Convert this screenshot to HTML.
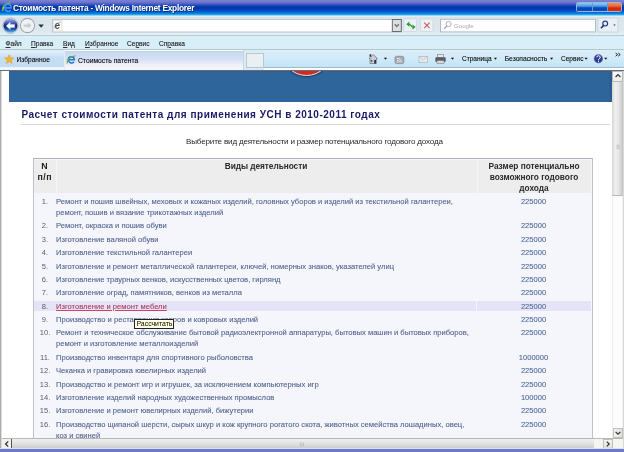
<!DOCTYPE html>
<html><head><meta charset="utf-8">
<style>
*{margin:0;padding:0;box-sizing:border-box}
html,body{width:624px;height:452px;overflow:hidden;background:#fff;font-family:"Liberation Sans",sans-serif}
#page,#menu,#fav,#title,#addr{will-change:transform}
.a{position:absolute}
#title{left:0;top:0;width:624px;height:16px;background:linear-gradient(#7b82d4 0px,#7078cf 2px,#4a5fc0 4px,#1040b0 6px,#0034a8 8px,#0044c0 10px,#0064d4 12px,#108ce0 14px,#40b8f0 15px,#d8f4fc 16px)}
#title .t{left:13px;top:2.2px;font-size:8.4px;font-weight:bold;letter-spacing:-0.27px;color:#fff;white-space:nowrap;text-shadow:0.6px 0.6px 0.4px #0a2a70;line-height:12px}
#addr{left:0;top:16px;width:624px;height:19px;background:linear-gradient(#e8f6fa 0,#d8e4ea 1px,#dce8ee 15px,#e2f0f6 18px)}
#menu{left:0;top:35px;width:624px;height:15px;background:#d8eef8;border-top:1px solid #b9cdd0;border-bottom:1px solid #b5c9cc}
#fav{left:0;top:50px;width:624px;height:21px;background:#d8ecf6}
.mi{top:0.7px;font-size:6.6px;color:#111;line-height:14px;white-space:nowrap;-webkit-text-stroke:0.1px #333}
.mi u{text-decoration-thickness:0.6px;text-underline-offset:1px}
.tb{font-size:6.6px;color:#000;line-height:10px;white-space:nowrap;-webkit-text-stroke:0.1px #222}
#page{left:0;top:0;width:624px;height:452px;overflow:hidden}
.hd{font-size:8.3px;font-weight:bold;color:#2a2a2a;line-height:11px;white-space:nowrap}
.row.sel{background:linear-gradient(#f6f7fc 0,#f6f7fc 0.6px,#e4e4f6 0.6px,#e6e2f8 11.3px,#f6f7fc 11.3px)}
.row.sel::after{content:"";position:absolute;left:441.5px;top:0.6px;width:1.5px;height:10.7px;background:#f4f4fc}
.sel .txt{color:#c8284a;text-decoration:underline;text-decoration-color:#d04060}
.row{position:absolute;left:34px;width:557px;background:#f5f6fc}
.num{position:absolute;left:0px;width:22px;text-align:center;color:#575d6e;font-size:7.56px;line-height:11.1px;white-space:nowrap}
.txt{position:absolute;left:22px;color:#4e5f88;-webkit-text-stroke:0.12px #6a7aa0;font-size:7.6px;line-height:11.1px;white-space:nowrap}
.val{position:absolute;left:442px;width:115px;text-align:center;color:#4c6496;-webkit-text-stroke:0.1px #6a80b0;font-size:7.56px;line-height:11.1px}
</style></head><body>
<div id="page" class="a">
 <div class="a" style="left:9px;top:70.5px;width:603.5px;height:31.5px;background:linear-gradient(90deg,#2e659b 0,#2e659b 600px,#2a5c8e 601px);border-top:1px solid #3d5f82"></div>
 <div class="a" style="left:280.5px;top:24.5px;width:51px;height:51px;border-radius:50%;background:#d42a1e;border:1.5px solid #f0e0e4;box-shadow:0 1px 1.5px #1a3a60"></div>
 <div class="a" style="left:0;top:0;width:624px;height:70.5px;background:transparent"></div>
 <div class="a" id="h1" style="left:21.5px;top:108px;font-size:10px;font-weight:bold;letter-spacing:0.51px;color:#1a1a68;line-height:14px;white-space:nowrap">Расчет стоимости патента для применения УСН в 2010-2011 годах</div>
 <div class="a" style="left:21px;top:123.5px;width:589px;height:1px;background:#d8d8d4"></div>
 <div class="a" style="left:186px;top:135.5px;font-size:8.1px;letter-spacing:-0.19px;color:#2a2a2a;line-height:11px;white-space:nowrap">Выберите вид деятельности и размер потенциального годового дохода</div>
 <div class="a" style="left:32.8px;top:157.8px;width:560px;height:290px;border:1.7px solid #c0c0ca;border-top:1.7px solid #b0b0bc;background:#f5f6fc"></div>
 <div class="a" style="left:34px;top:159.5px;width:557px;height:33.5px;background:#ededed"></div>
 <div class="a" style="left:55.5px;top:159.5px;width:0.6px;height:33.5px;background:#f6f6f6"></div>
 <div class="a" style="left:476.5px;top:159.5px;width:0.6px;height:33.5px;background:#f6f6f6"></div>
 <div class="a hd" style="left:34px;top:160.5px;width:21.5px;text-align:center;font-size:8.8px;letter-spacing:0.5px;color:#222">N<br>п/п</div>
 <div class="a hd" style="left:56px;top:160.5px;width:420px;text-align:center;letter-spacing:-0.05px">Виды деятельности</div>
 <div class="a hd" style="left:477px;top:160.5px;width:114px;text-align:center;letter-spacing:0px">Размер потенциально<br>возможного годового<br>дохода</div>
<div class="row" style="top:195.70px;height:24.5px"><div class="num" style="top:0.3px">1.</div><div class="txt" style="top:0.3px">Ремонт и пошив швейных, меховых и кожаных изделий, головных уборов и изделий из текстильной галантереи,<br>ремонт, пошив и вязание трикотажных изделий</div><div class="val" style="top:0.3px">225000</div></div>
<div class="row" style="top:220.20px;height:13.36px"><div class="num" style="top:0.3px">2.</div><div class="txt" style="top:0.3px">Ремонт, окраска и пошив обуви</div><div class="val" style="top:0.3px">225000</div></div>
<div class="row" style="top:233.56px;height:13.36px"><div class="num" style="top:0.3px">3.</div><div class="txt" style="top:0.3px">Изготовление валяной обуви</div><div class="val" style="top:0.3px">225000</div></div>
<div class="row" style="top:246.92px;height:13.36px"><div class="num" style="top:0.3px">4.</div><div class="txt" style="top:0.3px">Изготовление текстильной галантереи</div><div class="val" style="top:0.3px">225000</div></div>
<div class="row" style="top:260.28px;height:13.36px"><div class="num" style="top:0.3px">5.</div><div class="txt" style="top:0.3px">Изготовление и ремонт металлической галантереи, ключей, номерных знаков, указателей улиц</div><div class="val" style="top:0.3px">225000</div></div>
<div class="row" style="top:273.64px;height:13.36px"><div class="num" style="top:0.3px">6.</div><div class="txt" style="top:0.3px">Изготовление траурных венков, искусственных цветов, гирлянд</div><div class="val" style="top:0.3px">225000</div></div>
<div class="row" style="top:287.00px;height:13.36px"><div class="num" style="top:0.3px">7.</div><div class="txt" style="top:0.3px">Изготовление оград, памятников, венков из металла</div><div class="val" style="top:0.3px">225000</div></div>
<div class="row sel" style="top:300.36px;height:13.36px"><div class="num" style="top:0.3px">8.</div><div class="txt" style="top:0.3px">Изготовление и ремонт мебели</div><div class="val" style="top:0.3px">225000</div></div>
<div class="row" style="top:313.72px;height:13.36px"><div class="num" style="top:0.3px">9.</div><div class="txt" style="top:0.3px">Производство и реставрация ковров и ковровых изделий</div><div class="val" style="top:0.3px">225000</div></div>
<div class="row" style="top:327.08px;height:24.5px"><div class="num" style="top:0.3px">10.</div><div class="txt" style="top:0.3px">Ремонт и техническое обслуживание бытовой радиоэлектронной аппаратуры, бытовых машин и бытовых приборов,<br>ремонт и изготовление металлоизделий</div><div class="val" style="top:0.3px">225000</div></div>
<div class="row" style="top:351.58px;height:13.36px"><div class="num" style="top:0.3px">11.</div><div class="txt" style="top:0.3px">Производство инвентаря для спортивного рыболовства</div><div class="val" style="top:0.3px">1000000</div></div>
<div class="row" style="top:364.94px;height:13.36px"><div class="num" style="top:0.3px">12.</div><div class="txt" style="top:0.3px">Чеканка и гравировка ювелирных изделий</div><div class="val" style="top:0.3px">225000</div></div>
<div class="row" style="top:378.30px;height:13.36px"><div class="num" style="top:0.3px">13.</div><div class="txt" style="top:0.3px">Производство и ремонт игр и игрушек, за исключением компьютерных игр</div><div class="val" style="top:0.3px">225000</div></div>
<div class="row" style="top:391.66px;height:13.36px"><div class="num" style="top:0.3px">14.</div><div class="txt" style="top:0.3px">Изготовление изделий народных художественных промыслов</div><div class="val" style="top:0.3px">100000</div></div>
<div class="row" style="top:405.02px;height:13.36px"><div class="num" style="top:0.3px">15.</div><div class="txt" style="top:0.3px">Изготовление и ремонт ювелирных изделий, бижутерии</div><div class="val" style="top:0.3px">225000</div></div>
<div class="row" style="top:418.38px;height:24.5px"><div class="num" style="top:0.3px">16.</div><div class="txt" style="top:0.3px">Производство щипаной шерсти, сырых шкур и кож крупного рогатого скота, животных семейства лошадиных, овец,<br>коз и свиней</div><div class="val" style="top:0.3px">225000</div></div>
 <div class="a" style="left:134px;top:318.5px;width:40px;height:10px;background:#ffffe1;border:1px solid #222;font-size:6.9px;color:#000;line-height:8px;padding-left:1.5px;white-space:nowrap">Рассчитать</div>
</div>
<div id="title" class="a"><div class="t a">Стоимость патента - Windows Internet Explorer</div></div>
<div id="addr" class="a">
 <svg class="a" style="left:0;top:0" width="624" height="19" viewBox="0 16 624 19">
  <defs>
   <radialGradient id="bk" cx="0.5" cy="0.3" r="0.75">
    <stop offset="0" stop-color="#9090e0"/><stop offset="0.45" stop-color="#1e2e90"/><stop offset="0.8" stop-color="#1a4aa8"/><stop offset="1" stop-color="#40a8e8"/>
   </radialGradient>
   <linearGradient id="bk2" x1="0" y1="0" x2="0" y2="1">
    <stop offset="0" stop-color="#a8b0ec"/><stop offset="0.25" stop-color="#5a6ac8"/><stop offset="0.5" stop-color="#14207a"/><stop offset="0.72" stop-color="#1a4aa0"/><stop offset="1" stop-color="#58c0f0"/>
   </linearGradient>
  </defs>
  <circle cx="10.5" cy="25.7" r="7.7" fill="none" stroke="#a8b4c0" stroke-width="0.9"/>
  <circle cx="10.5" cy="25.7" r="7" fill="url(#bk2)"/>
  <path d="M6.2 25.9 L10.2 22.2 L10.2 24.4 L14.6 24.4 L14.6 27.4 L10.2 27.4 L10.2 29.6 Z" fill="#f4fcff" stroke="#e0f0ff" stroke-width="0.4" stroke-linejoin="round"/>
  <circle cx="27.5" cy="25.5" r="7.1" fill="#eef2f4" stroke="#a4a8ac" stroke-width="1.1"/>
  <path d="M31.5 25.6 L28 22.6 L28 24.4 L23.6 24.4 L23.6 26.8 L28 26.8 L28 28.6 Z" fill="#c8ccd0"/>
  <path d="M38.3 24.5 L43.9 24.5 L41.1 27.8 Z" fill="#22344e"/>
  <rect x="52.5" y="19.5" width="349" height="12.5" fill="#fff" stroke="#b4c2cc" stroke-width="0.9"/>
  <rect x="392.3" y="19.5" width="9" height="12" fill="#dcdfe0" stroke="#5e6266" stroke-width="0.9"/>
  <path d="M394.8 24.3 L396.8 26.6 L398.8 24.3" fill="none" stroke="#6a6e72" stroke-width="1.3"/>
  <rect x="53.3" y="20.3" width="8.6" height="10.8" fill="#f8f8f4" stroke="#e4dcc0" stroke-width="0.7"/>
  <text x="54.4" y="29.3" font-family="Liberation Sans" font-weight="bold" font-size="10" fill="#3c4c6c">e</text>
  <path d="M54.2 28.6 C54 26 56 22.6 61 22" fill="none" stroke="#8a9ab8" stroke-width="0.6"/>
  <rect x="404" y="19" width="12.5" height="12.5" rx="1" fill="#eaf2f6" stroke="#c4d0d8" stroke-width="0.6"/>
  <path d="M406.2 24.2 L409.4 21.6 L409.4 26.8 Z M415.6 27 L412.4 24.4 L412.4 29.6 Z" fill="#2e9a36"/>
  <path d="M409 24.2 C411 24.2 411 27 412.8 27" fill="none" stroke="#3aa843" stroke-width="1.5"/>
  <rect x="420.5" y="19" width="12.5" height="12.5" rx="1" fill="#eaf2f6" stroke="#c4d0d8" stroke-width="0.6"/>
  <path d="M424.2 22.6 L429.6 28.2 M429.6 22.6 L424.2 28.2" stroke="#cc5a5a" stroke-width="1.1"/>
  <rect x="440.5" y="19.3" width="155" height="12.6" fill="#fff" stroke="#a8b8c4" stroke-width="0.9"/>
  <circle cx="448.6" cy="24" r="2.6" fill="none" stroke="#a8a8a8" stroke-width="0.9"/>
  <path d="M446.8 26 L444.2 28.8" stroke="#a0a0a0" stroke-width="1.2"/>
  <text x="454" y="28.3" font-family="Liberation Sans" font-size="6.1" fill="#a8a8a8">Google</text>
  <rect x="598" y="18" width="20" height="14" fill="#e8f0f6" stroke="#c0ccd4" stroke-width="0.7"/>
  <circle cx="605.2" cy="23.6" r="2.4" fill="none" stroke="#2a3e8a" stroke-width="1.2"/>
  <path d="M603.6 25.4 L601 28.2" stroke="#1e2e7a" stroke-width="1.6"/>
  <path d="M613.3 24.5 L615.7 24.5 L614.5 26 Z" fill="#333"/>
 </svg>
</div>
<div id="menu" class="a">
 <div class="mi a" style="left:5.5px"><u>Ф</u>айл</div>
 <div class="mi a" style="left:31px"><u>П</u>равка</div>
 <div class="mi a" style="left:63px"><u>В</u>ид</div>
 <div class="mi a" style="left:85px"><u>И</u>збранное</div>
 <div class="mi a" style="left:127px">Се<u>р</u>вис</div>
 <div class="mi a" style="left:159px">Сп<u>р</u>авка</div>
</div>
<div id="fav" class="a">
 <div class="a" style="left:0;top:1px;width:64px;height:16.5px;background:linear-gradient(#e4f0fa,#c6def4 40%,#c4dcf2 100%);border-bottom:1px solid #e8f4fc"></div>
 <div class="a" style="left:64.3px;top:0.3px;width:180px;height:19.7px;background:linear-gradient(#f8fcff 0,#f8fcff 0.8px,#c4d2e0 1.2px,#c8d6ea 2.2px,#cadcf4 4px,#d4e0f4 9px,#e6eaf8 13px,#f2f2fc 16px,#f6f6fc);border-left:1px solid #e4ecf4;border-right:1px solid #c8d4e0"></div>
 <div class="a" style="left:264px;top:0;width:360px;height:17.5px;background:linear-gradient(#dceef8,#d0eaf8 50%,#bee4f8)"></div>
 <div class="a" style="left:264px;top:17px;width:360px;height:1px;background:#a8b8c0"></div>
 <div class="a" style="left:264px;top:18px;width:360px;height:2px;background:#fbfdff"></div>
 <div class="a" style="left:0;top:17.5px;width:64px;height:2.5px;background:#f0f6fa"></div>
 <div class="a" style="left:0;top:20px;width:624px;height:1px;background:#5a7088"></div>
 <div class="a" style="left:245.6px;top:3px;width:18px;height:15px;background:#e8f0f6;border:1px solid #bcc4cc"></div>
 <svg class="a" style="left:0;top:0" width="624" height="21" viewBox="0 50 624 21">
  <path d="M9.2 54.6 L10.5 57.8 L13.8 58 L11.2 60.2 L12.1 63.6 L9.2 61.7 L6.3 63.6 L7.2 60.2 L4.6 58 L7.9 57.8 Z" fill="#f2b632" stroke="#d89a20" stroke-width="0.5"/>
  <g transform="translate(71.3,60)">
   <path d="M-3 -0.2 A3 3 0 1 1 3 -0.2 L-2.8 -0.2 M-2.8 0.3 A3 2.9 0 0 0 2.6 1.8" fill="none" stroke="#2a78d0" stroke-width="1.6"/>
   <path d="M-4.2 3.6 C-5 1 -2 -3.5 4.2 -4.2" fill="none" stroke="#5ab040" stroke-width="1.1"/>
  </g>
  <path d="M369 58.5 L373.2 54.5 L377.4 58.5 L376.4 58.5 L376.4 63.5 L370 63.5 L370 58.5 Z" fill="#c8ccd4" stroke="#6a7080" stroke-width="0.7"/>
  <rect x="369.6" y="54.3" width="1.6" height="2.4" fill="#2a2e3a"/>
  <rect x="374.2" y="60" width="1.8" height="3.5" fill="#2e3240"/>
  <circle cx="371.6" cy="60.8" r="0.9" fill="#3a3e4a"/>
  <path d="M383.9 57.8 L387.1 57.8 L385.5 59.7 Z" fill="#111"/>
  <rect x="395" y="56.3" width="8.8" height="7.3" rx="1.5" fill="#a8acb0" stroke="#80868c" stroke-width="0.7"/>
  <path d="M397 58.4 A3.6 3.6 0 0 1 401.2 62.4 M397 60.4 A1.8 1.8 0 0 1 399.2 62.4" fill="none" stroke="#f4f6f8" stroke-width="0.9"/><circle cx="397.3" cy="62.1" r="0.6" fill="#f4f6f8"/>
  <rect x="419" y="56.5" width="8.6" height="6.2" fill="#e6e8ec" stroke="#a8acb2" stroke-width="0.6"/>
  <path d="M419.3 56.8 L423.3 59.8 L427.3 56.8" fill="none" stroke="#b4b8be" stroke-width="0.6"/>
  <rect x="437.5" y="54.5" width="6" height="3" fill="#e8e8e8" stroke="#7a7e84" stroke-width="0.6"/>
  <rect x="435.3" y="57.3" width="10.4" height="4.6" rx="0.8" fill="#5a5e64"/>
  <rect x="437" y="60.5" width="7" height="3" fill="#d8dadc" stroke="#6a6e74" stroke-width="0.5"/>
  <path d="M450.9 57.8 L454.1 57.8 L452.5 59.7 Z" fill="#111"/>
  <path d="M493.9 57.8 L497.1 57.8 L495.5 59.7 Z" fill="#111"/>
  <path d="M550.0 57.8 L553.2 57.8 L551.6 59.7 Z" fill="#111"/>
  <path d="M584.5 57.8 L587.7 57.8 L586.1 59.7 Z" fill="#111"/>
  <circle cx="598.4" cy="58.7" r="4.3" fill="#2e3c90" stroke="#6a78b8" stroke-width="0.5"/>
  <path d="M596.8 57.4 A1.7 1.6 0 1 1 599.2 58.8 L598.5 59.6 L598.5 60.4" fill="none" stroke="#fff" stroke-width="1"/>
  <circle cx="598.5" cy="61.6" r="0.55" fill="#fff"/>
  <path d="M604.2 57.8 L607.4 57.8 L605.8 59.7 Z" fill="#111"/>
  <path d="M615.6 53 L617.6 54.6 L615.6 56.2 M618.2 53 L620.2 54.6 L618.2 56.2" fill="none" stroke="#111" stroke-width="0.9"/>
 </svg>
 <div class="tb a" style="left:16.5px;top:54.5px;margin-top:-50px">Избранное</div>
 <div class="tb a" style="left:78px;top:55.5px;margin-top:-50px;font-size:6.75px">Стоимость патента</div>
 <div class="tb a" style="left:462px;top:54px;margin-top:-50px;font-size:6.55px;">Страница</div>
 <div class="tb a" style="left:504.7px;top:54px;margin-top:-50px;font-size:6.7px">Безопасность</div>
 <div class="tb a" style="left:561px;top:54px;margin-top:-50px;font-size:6.55px">Сервис</div>
</div>
<div class="a" style="left:576.4px;top:1.6px;width:45.3px;height:10.5px;border:0.7px solid #98b4dc;border-radius:1.5px;overflow:hidden">
 <div class="a" style="left:0;top:0;width:15.5px;height:10px;background:linear-gradient(#8ad0f0,#4c9ce0 32%,#0a44bc 48%,#0c54c8 100%);border-right:0.8px solid #6a9ad0"></div>
 <div class="a" style="left:15.5px;top:0;width:15px;height:10px;background:linear-gradient(#8ad0f0,#4c9ce0 32%,#0a44bc 48%,#0c54c8 100%);border-right:0.8px solid #6a9ad0"></div>
 <div class="a" style="left:30.5px;top:0;width:15px;height:10px;background:linear-gradient(#f49060,#e86838 32%,#d02808 50%,#d83410 100%)"></div>
</div>
<svg class="a" style="left:0;top:0" width="20" height="16">
 <path d="M2.8 11 C1.8 8 5 3.4 10.4 2.6" fill="none" stroke="#6ab848" stroke-width="2"/><path d="M3.4 9 C3.4 7 5.4 4.4 9 3.2" fill="none" stroke="#c8e890" stroke-width="0.6"/>
 <path d="M4.9 7.8 A3.1 3.1 0 1 1 11 7.8 L5.1 7.8 M5.1 8.2 A3.1 2.9 0 0 0 10.6 10.2" fill="none" stroke="#3a90ec" stroke-width="1.8"/>
</svg>
<div class="a" style="left:0;top:71px;width:2.2px;height:381px;background:linear-gradient(90deg,#9a9a9a,#b8b8b8 45%,#e4e4e4 80%,#fafafa)"></div>
<div class="a" style="left:623.2px;top:71px;width:0.8px;height:381px;background:#d8d8d8"></div>
<div class="a" id="vsb" style="left:612px;top:71px;width:11.2px;height:367px;background:linear-gradient(90deg,#ececec,#fdfdfd 15%,#fdfdfd 85%,#ececec)">
 <div class="a" style="left:0;top:0;width:11.2px;height:10.5px;background:linear-gradient(#fafafa,#ececea);border:0.7px solid #b8b8b8"></div>
 <svg class="a" style="left:0.6px;top:0" width="10" height="10"><path d="M2.6 6 L5 3.6 L7.4 6" fill="none" stroke="#333" stroke-width="1.2"/></svg>
 <div class="a" style="left:0;top:10.5px;width:11.2px;height:114px;background:linear-gradient(90deg,#d6d6d6,#f0f0f0 30%,#e6e6e6 60%,#c4c4c4);border-bottom:1px solid #b8b8b8;border-radius:1px"></div>
 <svg class="a" style="left:0.6px;top:72px" width="10" height="8"><path d="M3.5 2.2 L6.5 2.2 M3.5 3.8 L6.5 3.8 M3.5 5.4 L6.5 5.4" stroke="#a8a8a8" stroke-width="0.6"/></svg>
 <div class="a" style="left:0.5px;top:356.6px;width:10px;height:10px;background:linear-gradient(90deg,#f4f4f0,#e0e0dc);border:0.6px solid #c0c0bc"></div>
 <svg class="a" style="left:0.5px;top:356.6px" width="10" height="10"><path d="M2.6 3.8 L5 6.2 L7.4 3.8" fill="none" stroke="#333" stroke-width="1.2"/></svg>
</div>
<div class="a" id="hsb" style="left:1.5px;top:438.3px;width:621px;height:10.2px;background:#f4f4f0;border-top:0.8px solid #b8b8b8">
 <div class="a" style="left:0;top:0;width:10px;height:9.4px;background:#f2f2ee;border-right:1px solid #555"></div>
 <svg class="a" style="left:0;top:0" width="10" height="10"><path d="M6.2 2.4 L3.6 5 L6.2 7.6" fill="none" stroke="#333" stroke-width="1.3"/></svg>
 <div class="a" style="left:10.5px;top:0;width:582px;height:10px;background:linear-gradient(#f0f0f0,#e0e0e0 50%,#c8c8c8)"></div>
 <svg class="a" style="left:296px;top:1px" width="8" height="8"><path d="M2.4 2.5 L2.4 6.5 M4 2.5 L4 6.5 M5.6 2.5 L5.6 6.5" stroke="#b0b0b0" stroke-width="0.6"/></svg>
 <div class="a" style="left:601px;top:0;width:10px;height:10px;background:linear-gradient(#f4f4f0,#e0e0dc);border:0.6px solid #c0c0bc"></div>
 <svg class="a" style="left:601px;top:0" width="10" height="10"><path d="M3.8 2.6 L6.2 5 L3.8 7.4" fill="none" stroke="#333" stroke-width="1.2"/></svg>
</div>
<div class="a" style="left:0;top:448.3px;width:624px;height:1px;background:#d4e2f2"></div>
<div class="a" style="left:0;top:449.2px;width:624px;height:3px;background:#6e78cc"></div>
</body></html>
